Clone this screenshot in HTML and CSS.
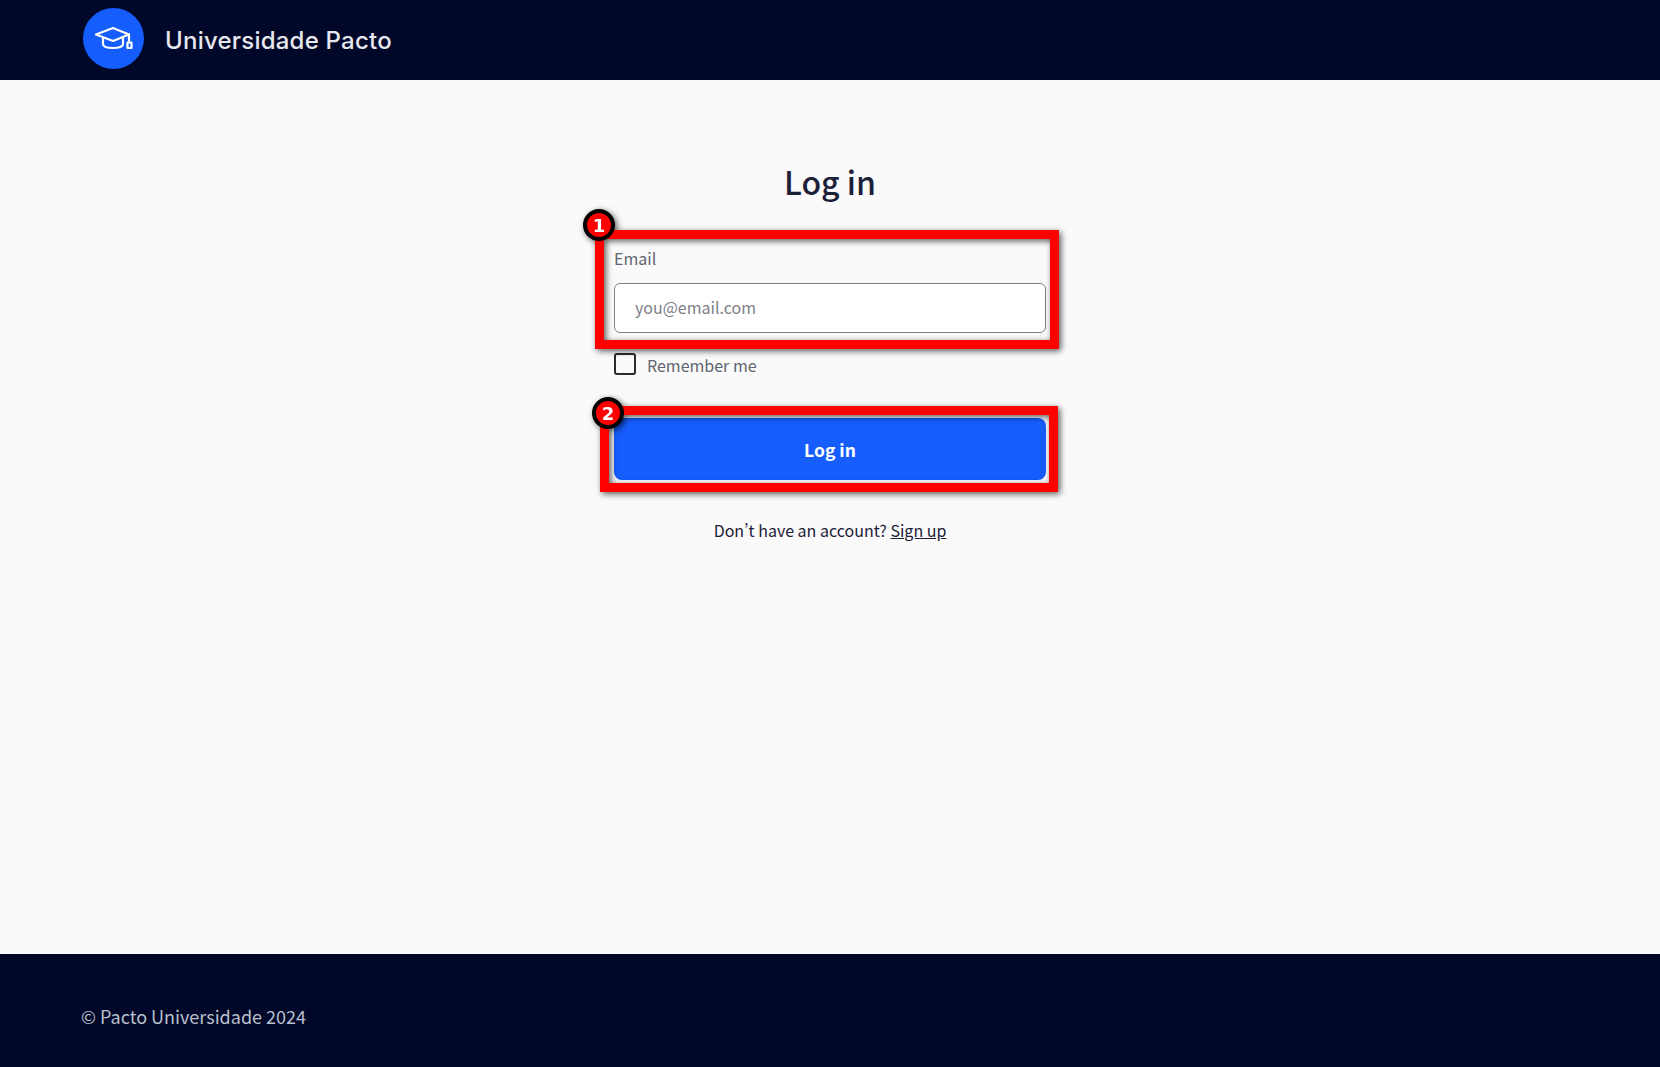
FILE: index.html
```html
<!DOCTYPE html>
<html lang="en">
<head>
    <meta charset="UTF-8">
    <meta name="viewport" content="width=device-width, initial-scale=1.0">
    <title>Log in - Universidade Pacto</title>
    <link rel="stylesheet" href="styles.css">
</head>
<body>
    <header class="site-header">
        <div class="logo-circle">
            <svg class="logo-icon" viewBox="0 0 40 24" fill="none" stroke="#fff" stroke-width="2.2" stroke-linejoin="round" stroke-linecap="round">
                <path d="M19 2 L2 8.500 L19 15 L35 8.500 Z"/>
                <path d="M9 12 V18 C9 20.500 13 22 19 22 C25 22 29 20.500 29 18 V12"/>
                <path d="M35 8.500 V15"/>
                <path d="M33.500 16.500 H37.500 V22 H33.500 Z"/>
            </svg>
        </div>
        <span class="brand-name">Universidade Pacto</span>
    </header>

    <main class="page-main">
        <h1 class="page-title">Log in</h1>
        <form class="login-form">
            <div class="email-field">
                <label class="field-label" for="email">Email</label>
                <input class="text-input" type="email" id="email" placeholder="you@email.com">
                <div class="callout-frame callout-email"><span class="callout-badge badge-email">1</span></div>
            </div>

            <label class="remember-row">
                <input class="remember-box" type="checkbox">
                <span>Remember me</span>
            </label>

            <div class="submit-wrap">
                <button class="submit-button" type="button">Log in</button>
                <div class="callout-frame callout-submit"><span class="callout-badge badge-submit">2</span></div>
            </div>
        </form>
        <p class="signup-text">Don’t have an account? <a href="#">Sign up</a></p>
    </main>

    <footer class="site-footer">© Pacto Universidade 2024</footer>
</body>
</html>
```
FILE: styles.css
```css
/* Page layout */
body {
    margin: 0;
    min-height: 1067px;
    display: flex;
    flex-direction: column;
    background-color: #FAFAFA;
    font-family: "Noto Sans CJK SC", "Noto Sans", sans-serif;
    font-variant-east-asian: proportional-width;
    font-size: 16px;
    color: #1C2038;
}

/* Header */
.site-header {
    height: 80px;
    display: flex;
    align-items: center;
    gap: 21px;
    padding-left: 83px;
    background-color: #000729;
}

.logo-circle {
    width: 61px;
    height: 61px;
    margin-top: -4px;
    border-radius: 50%;
    background-color: #155DFC;
    display: flex;
    justify-content: center;
    align-items: center;
}

.logo-icon {
    width: 40px;
    height: 24px;
}

.brand-name {
    font-family: Inter, sans-serif;
    font-size: 24px;
    font-weight: 500;
    letter-spacing: 0.22px;
    color: #E6E8EE;
}

/* Login form */
.page-main {
    flex: 1;
    display: flex;
    flex-direction: column;
    align-items: center;
    padding-top: 81px;
}

.page-title {
    margin: 0 0 46px;
    font-size: 32px;
    line-height: 40px;
    font-weight: 500;
}

.login-form {
    width: 432px;
    display: flex;
    flex-direction: column;
}

.email-field {
    position: relative;
    display: flex;
    flex-direction: column;
    gap: 12px;
}

.field-label {
    line-height: 22px;
    padding-bottom: 2px;
    color: #5F6470;
}

.text-input {
    box-sizing: border-box;
    height: 50px;
    padding: 0 20px 2px;
    border: 1px solid #808080;
    border-radius: 6px;
    background-color: #fff;
    font-family: inherit;
    font-size: 16px;
}

.text-input::placeholder {
    color: #7D8087;
}

.remember-row {
    display: flex;
    align-items: center;
    gap: 11px;
    margin-top: 20px;
    height: 22px;
    line-height: 24px;
    color: #5F6470;
}

.remember-row span {
    padding-top: 2px;
}

.remember-box {
    appearance: none;
    box-sizing: border-box;
    width: 22px;
    height: 22px;
    margin: 0;
    border: 2px solid #2B2B2B;
    border-radius: 3px;
    background-color: #FAFAFA;
}

.submit-wrap {
    position: relative;
    margin-top: 43px;
}

.submit-button {
    display: block;
    width: 100%;
    height: 62px;
    padding-top: 2px;
    border: none;
    border-radius: 8px;
    background-color: #155DFC;
    color: #fff;
    font-family: inherit;
    font-size: 17.5px;
    font-weight: 700;
}

.signup-text {
    margin: 38px 0 0;
    line-height: 24px;
}

.signup-text a {
    color: inherit;
}

/* Annotations drawn over the form */
.callout-frame {
    position: absolute;
    border: 9px solid #FF0000;
    filter: drop-shadow(2px 2px 3px rgba(0, 0, 0, 0.65));
    pointer-events: none;
}

.callout-email {
    top: -17px;
    left: -19px;
    right: -13px;
    bottom: -16px;
}

.callout-submit {
    top: -12px;
    left: -14px;
    right: -12px;
    bottom: -12px;
}

.callout-badge {
    position: absolute;
    box-sizing: border-box;
    width: 32px;
    height: 32px;
    border: 4px solid #000;
    border-radius: 50%;
    background-color: #FF0000;
    color: #fff;
    font-family: "DejaVu Sans", sans-serif;
    font-size: 18px;
    font-weight: 700;
    line-height: 25px;
    text-align: center;
}

.badge-email {
    top: -30px;
    left: -21px;
}

.badge-submit {
    top: -18px;
    left: -17px;
}

/* Footer */
.site-footer {
    height: 113px;
    box-sizing: border-box;
    padding: 49px 0 0 81px;
    background-color: #000729;
    color: #B9C0CC;
    font-size: 18px;
    line-height: 26px;
}
```
